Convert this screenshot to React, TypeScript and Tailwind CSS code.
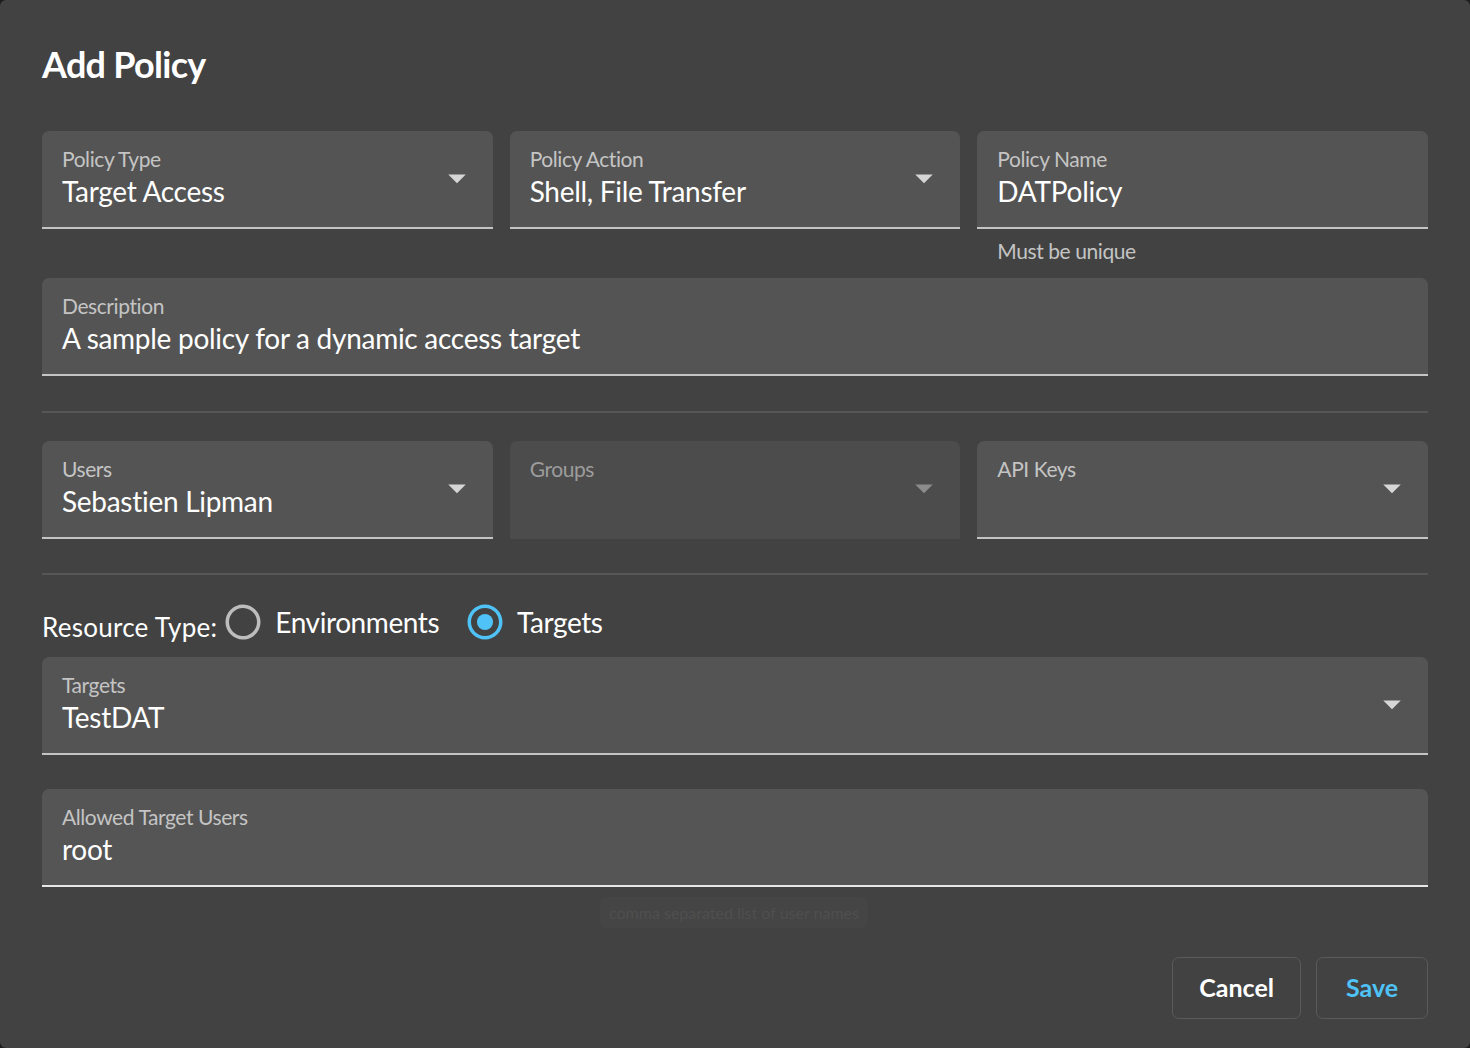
import React from 'react';

const font = { fontFamily: 'Lato, "Noto Sans", sans-serif' };

function Arrow({ dim }: { dim?: boolean }) {
    return (
        <svg
            className={`absolute right-[15px] top-[26px] w-[42px] h-[42px] ${dim ? 'text-[#8c8c8c]' : 'text-[#d6d6d6]'}`}
            viewBox="0 0 24 24"
            fill="currentColor"
        >
            <path d="M7 10l5 5 5-5z" />
        </svg>
    );
}

function Field({
    label,
    value,
    select,
    disabled,
    hover,
}: {
    label: string;
    value?: string;
    select?: boolean;
    disabled?: boolean;
    hover?: boolean;
}) {
    const tone = disabled
        ? 'bg-[#4c4c4c] border-transparent'
        : hover
          ? 'bg-[#555555] border-[#e6e6e6]'
          : 'bg-[#545454] border-[#c4c4c4]';
    return (
        <div className={`relative h-[98px] rounded-t-[7px] border-b-2 px-[20px] pt-[16px] ${tone}`}>
            <div className={`text-[21px] leading-[24px] tracking-[-0.02em] ${disabled ? 'text-[#9c9c9c]' : 'text-[#c4c4c4]'}`}>
                {label}
            </div>
            {value && (
                <div className="mt-[3px] text-[28px] leading-[34px] tracking-[-0.01em] text-white">{value}</div>
            )}
            {select && <Arrow dim={disabled} />}
        </div>
    );
}

function Radio({ checked, label }: { checked?: boolean; label: string }) {
    return (
        <div className="flex items-center gap-[11px]">
            <svg
                className={`w-[42px] h-[42px] ${checked ? 'text-[#4fc3f7]' : 'text-[#bdbdbd]'}`}
                viewBox="0 0 24 24"
                fill="currentColor"
            >
                <path d="M12 2C6.48 2 2 6.48 2 12s4.48 10 10 10 10-4.48 10-10S17.52 2 12 2zm0 18c-4.42 0-8-3.58-8-8s3.58-8 8-8 8 3.58 8 8-3.58 8-8 8z" />
                {checked && <circle cx="12" cy="12" r="4.6" />}
            </svg>
            <span className="text-[28px] leading-[36px] tracking-[-0.015em] text-white">{label}</span>
        </div>
    );
}

export default function App() {
    return (
        <div className="w-[1470px] h-[1048px] bg-[#1c1c1c]" style={font}>
            <div className="h-full rounded-[6px] bg-[#424242] px-[42px] pt-[40px]">
                <h2 className="text-[36px] leading-[48px] font-bold tracking-[-0.02em] text-white">Add Policy</h2>

                <div className="mt-[43px] grid grid-cols-3 gap-x-[17px] items-start">
                    <Field label="Policy Type" value="Target Access" select />
                    <Field label="Policy Action" value="Shell, File Transfer" select />
                    <div>
                        <Field label="Policy Name" value="DATPolicy" />
                        <div className="h-[49px] pt-[10px] px-[20px] text-[21px] leading-[24px] tracking-[-0.02em] text-[#c4c4c4]">
                            Must be unique
                        </div>
                    </div>
                </div>

                <Field label="Description" value="A sample policy for a dynamic access target" />

                <div className="mt-[35px] h-[2px] bg-[#565656]" />

                <div className="mt-[28px] grid grid-cols-3 gap-x-[17px]">
                    <Field label="Users" value="Sebastien Lipman" select />
                    <Field label="Groups" select disabled />
                    <Field label="API Keys" select />
                </div>

                <div className="mt-[34px] h-[2px] bg-[#565656]" />

                <div className="mt-[29px] mb-[17px] h-[36px] flex items-center">
                    <span className="pt-[10px] mr-[5px] text-[26px] leading-[36px] tracking-[0.01em] text-white">Resource Type:</span>
                    <Radio label="Environments" />
                    <div className="w-[25px]" />
                    <Radio label="Targets" checked />
                </div>

                <Field label="Targets" value="TestDAT" select />

                <div className="relative mt-[34px]">
                    <Field label="Allowed Target Users" value="root" hover />
                    <div className="absolute left-[558px] top-[108px] w-[268px] h-[31px] rounded-[6px] bg-[#454545] flex items-center justify-center text-[16px] text-[#4f4f4f]">
                        comma separated list of user names
                    </div>
                </div>

                <div className="mt-[70px] flex justify-end gap-[15px]">
                    <button className="h-[62px] min-w-[112px] px-[26px] rounded-[7px] border border-[#5a5a5a] text-[25px] font-bold text-white">
                        Cancel
                    </button>
                    <button className="h-[62px] min-w-[112px] px-[26px] rounded-[7px] border border-[#5a5a5a] text-[25px] font-bold text-[#4fc3f7]">
                        Save
                    </button>
                </div>
            </div>
        </div>
    );
}
